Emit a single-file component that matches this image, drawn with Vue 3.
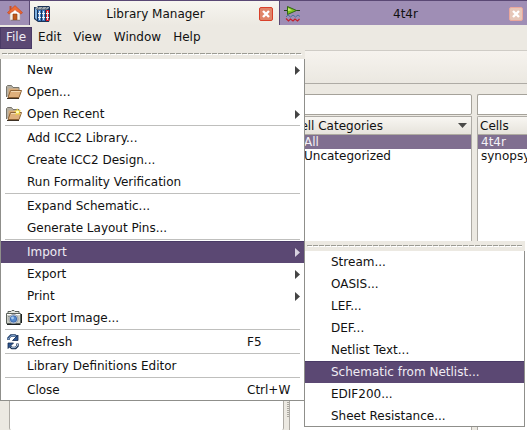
<script setup>
import { ref } from 'vue'

const menuBar = ['File', 'Edit', 'View', 'Window', 'Help']

const fileMenu = [
  [
    { label: 'New', sub: true },
    { label: 'Open...', icon: 'open' },
    { label: 'Open Recent', icon: 'recent', sub: true },
  ],
  [
    { label: 'Add ICC2 Library...' },
    { label: 'Create ICC2 Design...' },
    { label: 'Run Formality Verification' },
  ],
  [{ label: 'Expand Schematic...' }, { label: 'Generate Layout Pins...' }],
  [
    { label: 'Import', sub: true },
    { label: 'Export', sub: true },
    { label: 'Print', sub: true },
    { label: 'Export Image...', icon: 'camera' },
  ],
  [{ label: 'Refresh', icon: 'refresh', key: 'F5' }],
  [{ label: 'Library Definitions Editor' }],
  [{ label: 'Close', key: 'Ctrl+W' }],
]

const importMenu = [
  'Stream...',
  'OASIS...',
  'LEF...',
  'DEF...',
  'Netlist Text...',
  'Schematic from Netlist...',
  'EDIF200...',
  'Sheet Resistance...',
]

const openItem = ref('Import')
const activeImport = ref('Schematic from Netlist...')
const categoryFilter = ref('')
const cellFilter = ref('')
</script>

<template>
  <div class="window">
    <header class="tabs">
      <button class="home" aria-label="Home">
        <svg width="16" height="16" viewBox="0 0 16 16">
          <path d="M3 7h10v8H3z" fill="#f4efe8" stroke="#b9aca4" stroke-width=".6" />
          <path d="M2.500 1h2v4h-2z" fill="#c2502c" />
          <path d="M8 .6 15.600 7.600 14 9.200 8 4 2 9.200.4 7.600z" fill="#e8622e" stroke="#b8401c" stroke-width=".5" />
          <path d="M8 1.200 13.500 6.500H2.500z" fill="#ec6c38" />
          <path d="M8 5 12 9H4z" fill="#fff" />
          <path d="M6 9h4v6H6z" fill="#c05a1c" stroke="#8a3a10" stroke-width=".6" />
          <path d="M4 15.400h9" stroke="#8a7a88" />
        </svg>
      </button>
      <div class="tab current">
        <svg class="tab-icon" width="16" height="16" viewBox="0 0 16 16">
          <path d="M0 1h3l1-1h11l1 1v12l-1 3H4L0 13z" fill="#1a3358" />
          <path d="M1 2l2 2v10l-2-2z" fill="#7fb2e2" />
          <path d="M1 2l2-1h12v1l-2 1.500H3z" fill="#a4aeb6" />
          <path d="M5 1 3 3.500M9 1 7 3.500M13 1l-2 2.500" fill="none" stroke="#4c555e" stroke-width=".8" />
          <path d="M4 4h3v11H4zM8 4h3v11H8z" fill="#3c76bd" />
          <path d="M12 4h3v11h-3z" fill="#d91c28" />
          <path d="M5 5h1v9H5zM9 5h1v9H9zM13 5h1v9h-1z" fill="#dce8f4" />
          <path d="M4 7h3v1H4zM8 7h3v1H8zM12 7h3v1h-3zM4 11h3v1H4zM8 11h3v1H8zM12 11h3v1h-3z" fill="#eef3f8" />
        </svg>
        <span>Library Manager</span>
        <button class="close" aria-label="Close Library Manager">
          <svg width="8" height="8" viewBox="0 0 8 8"><path d="M1 1l6 6M7 1 1 7" stroke="#fff" stroke-width="2.4" /></svg>
        </button>
      </div>
      <div class="tab">
        <svg class="tab-icon" width="16" height="16" viewBox="0 0 16 16">
          <path d="M0 4.500h16" stroke="#27401c" />
          <path d="M3.500.500v8l9-4z" fill="#7fc41e" stroke="#2f6416" />
          <path d="M4 2v3l4-.8z" fill="#c8f070" />
          <path d="M2 11l2-2 2.500 2L9 9l2.500 2L14 9l2 1.500" fill="none" stroke="#47749c" />
          <path d="M2 12.500l2.500 2.500 2-2 2.500 2 2-2 2.500 2 2-2" fill="none" stroke="#c3202c" stroke-width="1.2" />
        </svg>
        <span>4t4r</span>
        <button class="close faded" aria-label="Close 4t4r">
          <svg width="8" height="8" viewBox="0 0 8 8"><path d="M1 1l6 6M7 1 1 7" stroke="#fff" stroke-width="2.4" /></svg>
        </button>
      </div>
    </header>

    <nav class="menubar">
      <div v-for="name in menuBar" :key="name" class="menubar-item">
        <button :class="{ active: name === 'File' }">{{ name }}</button>
        <div v-if="name === 'File'" class="menu file-menu">
          <div class="tearoff"><i></i></div>
          <div class="menu-body">
            <div v-for="(group, g) in fileMenu" :key="g" class="group">
              <button
                v-for="item in group"
                :key="item.label"
                class="item"
                :class="{ active: item.label === openItem }"
              >
                <span class="icon">
                  <svg v-if="item.icon === 'open' || item.icon === 'recent'" width="16" height="16" viewBox="0 0 16 16">
                    <path d="M.5 13V2.500l1-1h4l1.500 2h6V7" fill="#b5b0a4" stroke="#77746b" />
                    <path d="M2.500 12V4.500h10V7" fill="#d9ab78" />
                    <path d="M4.500 6.500h11L13 13.500H2z" fill="#dfb07c" stroke="#8d6236" />
                    <path d="M5 7.500h9.500" stroke="#f3d9b4" />
                    <path d="M1 14.500h12" stroke="#3c3024" />
                    <g v-if="item.icon === 'recent'">
                      <path d="M11 2l1.200 2.300L15 4.500 13.500 6.500 14.500 9 12 8l-2.500 1.500.5-3L8 5l2.500-.5z" fill="#f0d43a" />
                      <circle cx="11.500" cy="6" r="1.600" fill="#fffbc0" />
                    </g>
                  </svg>
                  <svg v-else-if="item.icon === 'camera'" width="16" height="16" viewBox="0 0 16 16">
                    <path d="M.5 3.500H14.500V13.500H.5z" fill="#c9ccc4" stroke="#5c625c" />
                    <path d="M2 3V1.500h3L6 .5h2l1 1h4V3" fill="#e4e6df" stroke="#5c625c" />
                    <path d="M1 14.500h13.500M15.500 4v9" stroke="#1c2020" />
                    <path d="M1 4.500h13" stroke="#fff" />
                    <path d="M2 6h2v1H2z" fill="#8a908c" />
                    <circle cx="7.500" cy="9" r="4.500" fill="#e6ebf0" stroke="#8a9098" />
                    <circle cx="7.500" cy="9" r="3.200" fill="#5488cb" stroke="#3f6cae" />
                    <circle cx="6.500" cy="8" r="1.400" fill="#a8cbf0" />
                  </svg>
                  <svg v-else-if="item.icon === 'refresh'" width="16" height="16" viewBox="0 0 16 16">
                    <path d="M2.500 6V4L5 1.500h4L11 3" fill="none" stroke="#1c3a66" stroke-width="2.400" />
                    <path d="M2.500 5.500V4.200L5.200 1.700H9L10.500 3" fill="none" stroke="#8fb2dc" stroke-width="1" />
                    <path d="M12 1v5.500H6.500z" fill="#2b5490" stroke="#142a4c" stroke-width=".8" />
                    <path d="M11.500 9.500V12L9.500 14H6L4 12.500" fill="none" stroke="#142a4c" stroke-width="2.400" />
                    <path d="M11.500 10v1.700L9.300 13.700H6L4.500 12.500" fill="none" stroke="#b4cce8" stroke-width="1" />
                    <path d="M2 14.500V9h5.500z" fill="#2b5490" stroke="#142a4c" stroke-width=".8" />
                  </svg>
                </span>
                <span class="label">{{ item.label }}</span>
                <span class="key">{{ item.key }}</span>
                <svg v-if="item.sub" class="arrow" width="5" height="9" viewBox="0 0 5 9">
                  <path d="M0 0 5 4.500 0 9z" fill="currentColor" />
                </svg>
              </button>
            </div>
          </div>

          <div class="menu import-menu">
            <div class="tearoff"><i></i></div>
            <div class="menu-body">
              <button
                v-for="label in importMenu"
                :key="label"
                class="item"
                :class="{ active: label === activeImport }"
              >
                <span class="icon"></span>
                <span class="label">{{ label }}</span>
              </button>
            </div>
          </div>
        </div>
      </div>
    </nav>

    <div class="toolbar"></div>

    <main class="panes">
      <section class="pane libraries">
        <div class="list"></div>
      </section>
      <div class="splitter"><i></i></div>
      <section class="pane categories">
        <input v-model="categoryFilter" type="text" aria-label="Filter cell categories" />
        <div class="list">
          <table>
            <thead>
              <tr>
                <th>
                  <div class="head">
                    <span>Cell Categories</span>
                    <svg width="9" height="5" viewBox="0 0 9 5"><path d="M0 0h9L4.500 5z" fill="#4a4a48" /></svg>
                  </div>
                </th>
              </tr>
            </thead>
            <tbody>
              <tr class="selected"><td>All</td></tr>
              <tr><td>Uncategorized</td></tr>
            </tbody>
          </table>
        </div>
      </section>
      <div class="splitter"></div>
      <section class="pane cells">
        <input v-model="cellFilter" type="text" aria-label="Filter cells" />
        <div class="list">
          <table>
            <thead>
              <tr><th><div class="head"><span>Cells</span></div></th></tr>
            </thead>
            <tbody>
              <tr class="selected"><td>4t4r</td></tr>
              <tr><td>synopsys</td></tr>
            </tbody>
          </table>
        </div>
      </section>
    </main>
  </div>
</template>

<style>
body {
  margin: 0;
  overflow: hidden;
}
</style>

<style scoped>
.window {
  display: flex;
  flex-direction: column;
  height: 100vh;
  overflow: hidden;
  background: #ece9e2;
  color: #111;
  font: 12px/16px "DejaVu Sans", sans-serif;
}
.window * {
  box-sizing: border-box;
}
button {
  margin: 0;
  padding: 0;
  border: 0;
  background: none;
  color: inherit;
  font: inherit;
}
svg {
  display: block;
}

.tabs {
  display: grid;
  grid-template-columns: 29px 125fr 124fr;
  height: 25px;
  flex: none;
  border-top: 1px solid #5a4874;
}
.home {
  display: flex;
  align-items: center;
  justify-content: center;
  background: #9f8eb5;
}
.tab {
  display: grid;
  grid-template-columns: 18px 1fr 14px;
  align-items: center;
  padding: 1px 4px 0 4px;
  border-left: 1px solid #5a4874;
  background: #9f8eb5;
  text-align: center;
}
.tab.current {
  padding-right: 6px;
  background: linear-gradient(#f7f5f0, #ece9e2);
}
.close {
  display: flex;
  align-items: center;
  justify-content: center;
  height: 14px;
  border: 1px solid #d8402a;
  border-radius: 2px;
  background: #e08468;
}
.close.faded {
  border-color: #eaa79c;
  background: #e6c6b8;
}

.menubar {
  display: flex;
  flex: none;
  height: 25px;
  padding-top: 2px;
}
.menubar-item > button {
  height: 22px;
  padding: 0 6px 2px;
}
.menubar-item > button.active {
  box-shadow: inset 0 0 0 1px #4a3a66;
  background: #5b4873;
  color: #f0ecf4;
}

.menu {
  position: absolute;
  z-index: 1;
}
.file-menu {
  top: 50px;
  left: 0;
  width: 305px;
}
.import-menu {
  top: 191px;
  left: 304px;
  width: 221px;
}
.tearoff {
  height: 9px;
  padding: 3px 3px 0 2px;
  background: #ece9e2;
}
.import-menu .tearoff {
  height: 10px;
  padding-top: 4px;
  border-left: 1px solid #8f8f8b;
}
.tearoff i {
  display: block;
  height: 2px;
  background:
    repeating-linear-gradient(90deg, #9b9b93 0 5px, transparent 5px 6px) 0 0 / 100% 1px no-repeat,
    repeating-linear-gradient(90deg, transparent 0 1px, #fff 1px 6px) 0 1px / 100% 1px no-repeat;
}
.menu-body {
  position: relative;
  background: #fff;
}
.menu-body::after {
  content: "";
  position: absolute;
  inset: 0;
  border: 1px solid #8f8f8b;
  border-top: 0;
  pointer-events: none;
}
.group + .group::before {
  content: "";
  display: block;
  height: 1px;
  margin: 0 5px 1px;
  background: #bfbfbd;
}
.item {
  display: flex;
  align-items: center;
  width: 100%;
  height: 22px;
  padding-right: 5px;
  text-align: left;
}
.item.active {
  box-shadow: inset 0 1px #4a3a66;
  background: #5b4873;
  color: #f0ecf4;
}
.icon {
  flex: none;
  width: 27px;
  padding-left: 6px;
}
.label {
  flex: 1;
  white-space: nowrap;
}
.key {
  width: 53px;
}
.arrow {
  margin-left: -5px;
  color: #444;
}
.active .arrow {
  color: #d8d2e0;
}

.toolbar {
  flex: none;
  height: 34px;
  border-top: 1px solid #cfccc6;
  border-bottom: 1px solid #aeaba5;
  background: linear-gradient(#f6f3ee, #ebe8e1);
}
.panes {
  display: grid;
  grid-template-columns: 275px 5px 183px 5px 1fr;
  flex: 1;
  padding: 10px 0 0 9px;
}
.pane {
  display: flex;
  flex-direction: column;
  gap: 1px;
  min-width: 0;
}
.pane input {
  width: 100%;
  height: 21px;
  padding: 0 4px;
  border: 1px solid #a5a29a;
  border-radius: 2px;
  outline: 0;
  background: #fff;
  font: inherit;
}
.pane .list {
  flex: 1;
  border: 1px solid #aeaba5;
  border-bottom: 0;
  background: #fff;
}
.cells input,
.cells .list {
  border-right: 0;
  border-radius: 2px 0 0 0;
}
.splitter {
  display: flex;
  justify-content: flex-end;
  padding-top: 306px;
}
.splitter i {
  width: 2px;
  height: 17px;
  background: repeating-linear-gradient(#aaa79f 0 1px, transparent 1px 2px);
}
table {
  width: 100%;
  border-collapse: collapse;
}
th,
td {
  padding: 0;
  font-weight: normal;
  text-align: left;
}
th {
  background: linear-gradient(#f8f6f2, #e5e2da);
}
.head {
  display: flex;
  align-items: center;
  justify-content: space-between;
  height: 18px;
  padding: 0 4px 0 2px;
  border-bottom: 1px solid #aeaba0;
}
td {
  height: 14px;
  padding-left: 3px;
  line-height: 14px;
}
.categories td {
  padding-left: 14px;
}
.selected td {
  background: #806f90;
  color: #f4f1f6;
}
.libraries .list {
  border-radius: 2px;
}
</style>
